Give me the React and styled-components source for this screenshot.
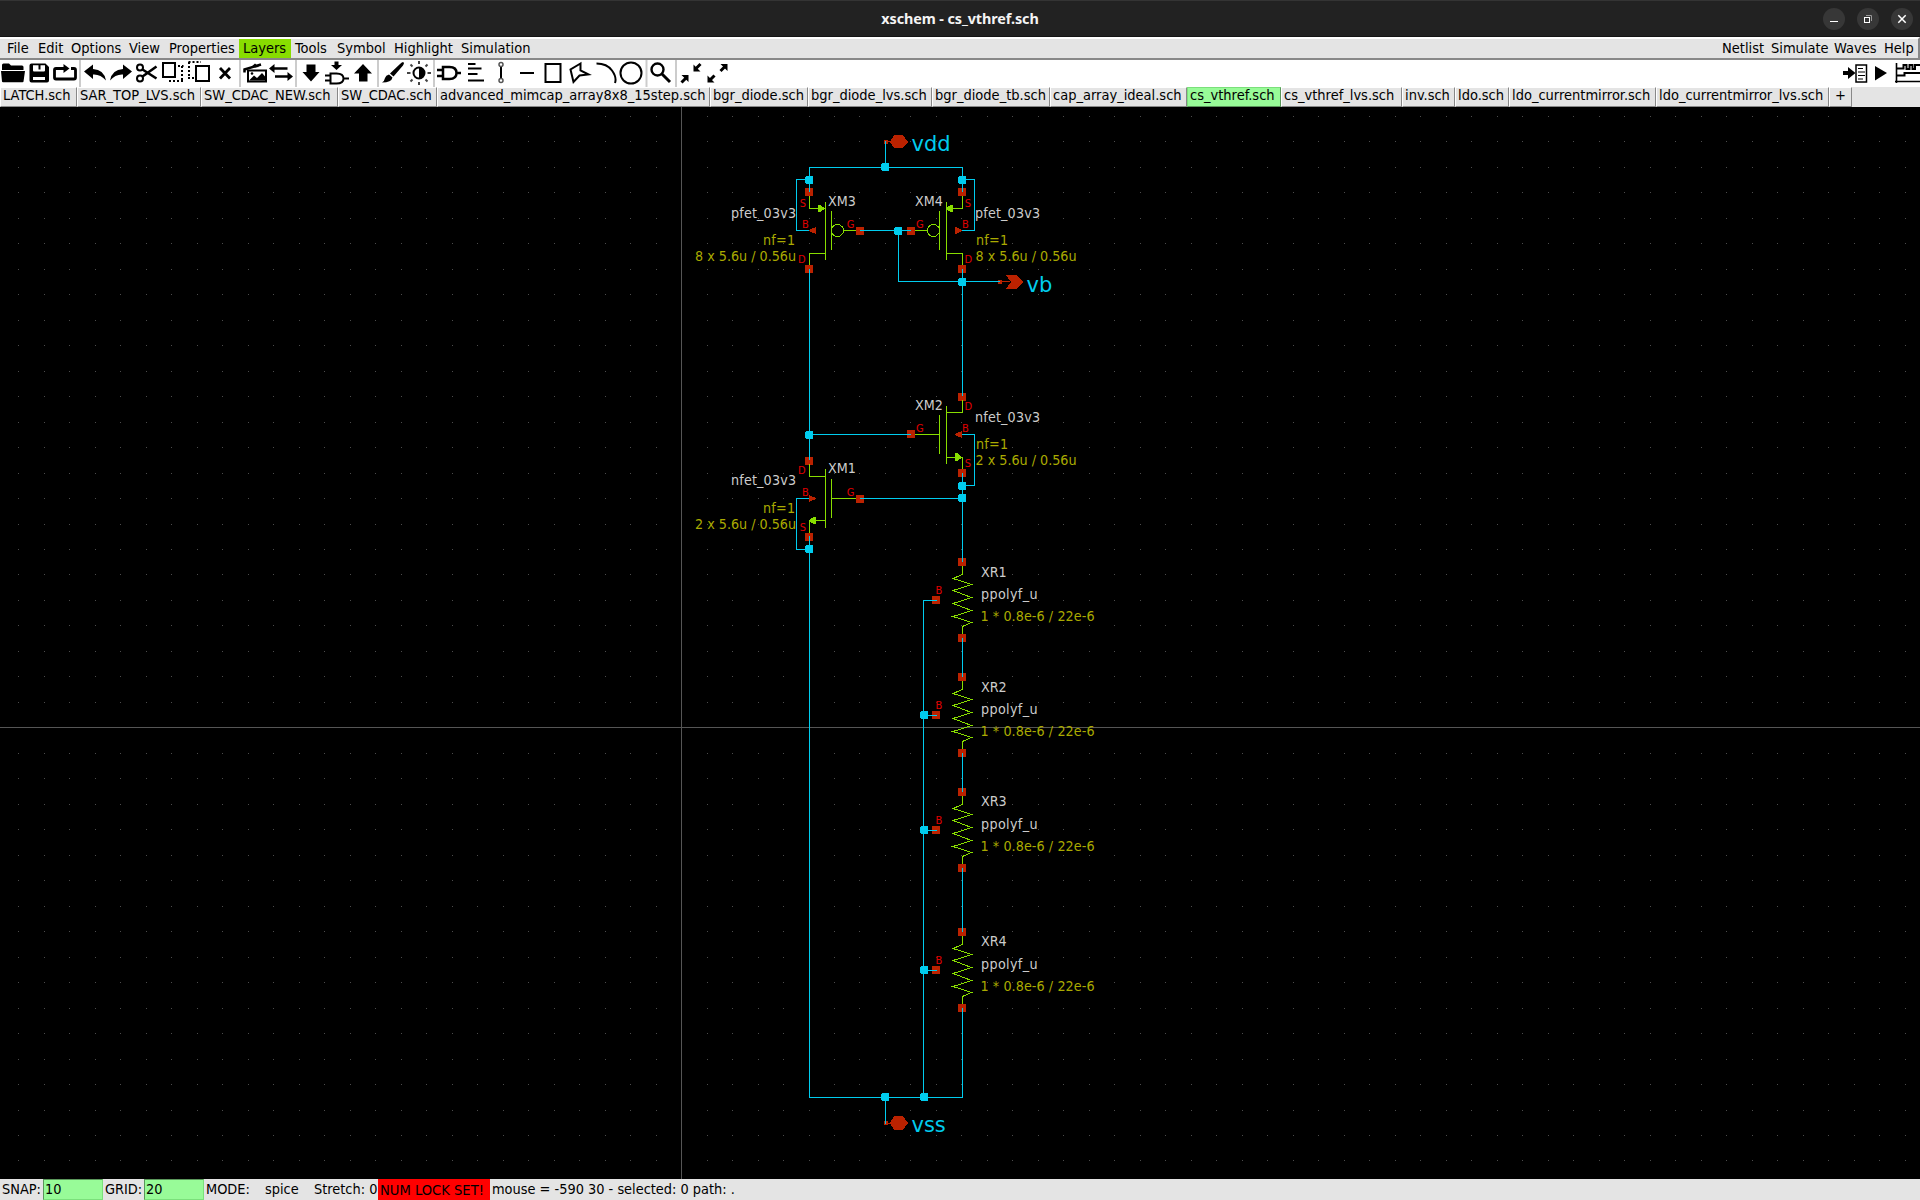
import React from "react";
import styled, { createGlobalStyle, css } from "styled-components";

const Global = createGlobalStyle`
  * { box-sizing: border-box; }
  body { margin: 0; background: #000; overflow: hidden; }
`;

const WIRE = "#00ccee";
const SYM = "#88dd00";
const PIN = "#bb2200";
const UI_FONT = '"DejaVu Sans Condensed", "DejaVu Sans", sans-serif';

const Window = styled.div`
  width: 1920px;
  height: 1200px;
  display: flex;
  flex-direction: column;
  font-family: ${UI_FONT};
  font-stretch: condensed;
  font-size: 14.5px;
  color: #000;
`;

const TitleBar = styled.header`
  height: 37px;
  flex: none;
  display: grid;
  grid-template-columns: 1fr auto 1fr;
  align-items: center;
  background: #222;
  border-top: 1px solid #343434;
  border-bottom: 1px solid #151515;
`;
const Title = styled.h1`
  margin: 0;
  grid-column: 2;
  font: 700 14.4px "Noto Sans", sans-serif;
  letter-spacing: -0.1px;
  color: #f4f4f4;
`;
const WindowButtons = styled.div`
  justify-self: end;
  display: flex;
  gap: 12px;
  padding-right: 7px;
`;
const RoundButton = styled.div`
  width: 22px;
  height: 22px;
  border-radius: 50%;
  background: #373737;
  svg { display: block; }
`;

const MenuBar = styled.nav`
  height: 23px;
  flex: none;
  display: flex;
  padding-left: 3px;
  background: #e4e4e4;
  border-top: 2px solid #fff;
  border-bottom: 2px solid #888;
  border-right: 2px solid #888;
`;
const MenuItem = styled.div`
  width: ${(p) => p.$w}px;
  padding-left: 4px;
  line-height: 19px;
  white-space: nowrap;
  background: ${(p) => (p.$on ? "#88dd00" : "transparent")};
`;
const Spacer = styled.div`
  flex: 1;
`;

const Toolbar = styled.div`
  height: 27px;
  flex: none;
  display: flex;
  background: #fff;
`;
const IconSvg = styled.svg`
  flex: none;
  display: block;
`;

const TabBar = styled.div`
  height: 20px;
  flex: none;
  display: flex;
  background: #e4e4e4;
`;
const Tab = styled.div`
  width: ${(p) => p.$w}px;
  flex: none;
  padding-left: ${(p) => p.$pad ?? 2}px;
  line-height: 15px;
  white-space: nowrap;
  background: #e4e4e4;
  border: 1px solid #888;
  border-top-color: #fff;
  border-left-color: #fff;
  ${(p) =>
    p.$on &&
    css`
      background: #98fb98;
      border-color: #7be07b #5a965a #5a965a #7be07b;
    `}
`;

const Canvas = styled.main`
  height: 1072px;
  flex: none;
  background: #000;
  svg { display: block; }
`;

const StatusBar = styled.footer`
  height: 21px;
  flex: none;
  display: flex;
  background: #e4e4e4;
  font-size: 14.4px;
  line-height: 21px;
  white-space: pre;
`;
const Field = styled.div`
  width: ${(p) => p.$w}px;
  padding-left: ${(p) => p.$pad ?? 2}px;
  flex: none;
`;
const Entry = styled(Field)`
  background: #98fb98;
  border: 1px solid #5a965a;
  border-right-color: #7be07b;
  border-bottom-color: #7be07b;
  line-height: 19px;
`;
const Alert = styled(Field)`
  background: #f00;
  font-size: 14.6px;
`;

const menus = [
  ["File", 31], ["Edit", 33], ["Options", 58], ["View", 40], ["Properties", 74],
  ["Layers", 52, true], ["Tools", 42], ["Symbol", 57], ["Highlight", 67], ["Simulation", 90],
];
const actions = [["Netlist", 49], ["Simulate", 63], ["Waves", 50], ["Help", 38]];

const tabs = [
  ["LATCH.sch", 77], ["SAR_TOP_LVS.sch", 124], ["SW_CDAC_NEW.sch", 137], ["SW_CDAC.sch", 99],
  ["advanced_mimcap_array8x8_15step.sch", 273], ["bgr_diode.sch", 98], ["bgr_diode_lvs.sch", 124],
  ["bgr_diode_tb.sch", 118], ["cap_array_ideal.sch", 137], ["cs_vthref.sch", 94],
  ["cs_vthref_lvs.sch", 121], ["inv.sch", 53], ["ldo.sch", 54], ["ldo_currentmirror.sch", 147],
  ["ldo_currentmirror_lvs.sch", 173],
];

/* Toolbar icons share one horizontal coordinate strip; each owns the slice [x, x + w]. */
const Icon = ({ x, w, children }) => (
  <IconSvg width={w} height="27" viewBox={`${x} 0 ${w} 27`} fill="none" stroke="#000" strokeWidth="2">
    {children}
  </IconSvg>
);
const Sep = ({ x, w }) => (
  <Icon x={x} w={w}>
    <path d={`M${x + w / 2} 0V27`} stroke="#ccc" />
  </Icon>
);
const S = { fill: "#000", stroke: "none" };

const ToolIcons = () => (
  <>
    <Icon x={0} w={27}>
      <path {...S} d="M2 10V5q0-1.500 1.500-1.500H9l2 2h11q1.500 0 1.500 1.500v3zM1 11H25L23.500 21.500q0 .8-1 .8H3q-.8 0-1-.8z" />
    </Icon>
    <Icon x={27} w={24}>
      <path {...S} fillRule="evenodd" d="M29.500 5.500q0-2 2-2H45.500l3.500 3.500V20.500q0 2-2 2H31.500q-2 0-2-2zM33 5.200V10.500q0 1 1 1H44q1 0 1-1V5.200h-4.500v4.300h-2V5.200zM33 17v3H45v-3z" />
    </Icon>
    <Icon x={51} w={27}>
      <path strokeWidth="2.800" d="M64 8.500H56q-1.500 0-1.500 1.500v7.500q0 1.500 1.500 1.500H74q1.500 0 1.500-1.500V10q0-1.500-1.500-1.500H71" />
      <path {...S} d="M63.500 4l6 4.500-6 4.500z" />
    </Icon>
    <Sep x={78} w={4} />
    <Icon x={82} w={26}>
      <path {...S} d="M84 11.500L93 4.500V9q11 .5 13 11.500Q100.500 14 93 14.500V19z" />
    </Icon>
    <Icon x={108} w={26}>
      <path {...S} d="M132 11.500L123 4.500V9q-11 .5-13 11.500Q115.500 14 123 14.500V19z" />
    </Icon>
    <Icon x={134} w={25}>
      <circle cx="140" cy="7.500" r="3" />
      <circle cx="140" cy="18.500" r="3" />
      <path strokeWidth="2.600" d="M142.500 9.500L156.500 18.500M142.500 16.500L156.500 6.500" />
    </Icon>
    <Icon x={159} w={26}>
      <rect x="163" y="3" width="12" height="14" />
      <path strokeDasharray="2 2" d="M178 6H183.500M182 6V22M169 21H183" />
    </Icon>
    <Icon x={185} w={28}>
      <path strokeDasharray="2 2" d="M188.500 2H201M189 2V18M188 18H194" />
      <rect x="196" y="6" width="13" height="15" />
    </Icon>
    <Icon x={213} w={25}>
      <path strokeWidth="2.800" d="M220 8L230 18.500M230 8L220 18.500" />
    </Icon>
    <Sep x={238} w={4} />
    <Icon x={242} w={26}>
      <path d="M244.500 12.500V9.500L261 4.500" strokeWidth="2.500" />
      <rect x="248" y="10.500" width="18" height="11" />
      <path {...S} d="M249.500 20l4.500-4.500 3 2.500 5-5 3.500 4v3.500h-16zM250 8l5-4.500 4 3.500z" />
      <circle {...S} cx="252" cy="13.500" r="1.300" />
    </Icon>
    <Icon x={268} w={26}>
      <path d="M272 8.500H287.500M275 16.500H290" strokeWidth="2.500" />
      <path {...S} d="M269 8.500l5.500-4.500v9zM293 16.500l-5.500-4.500v9z" />
    </Icon>
    <Sep x={294} w={4} />
    <Icon x={298} w={25}>
      <path {...S} d="M306.500 4.500h9V12h4l-8.500 9.500-8.500-9.500h4z" />
    </Icon>
    <Icon x={323} w={29}>
      <path d="M330.500 13.500h6q7 0 7 5t-7 5h-6zM325 15.500h5M325 20.500h5M344 18.500h5" />
      <path {...S} d="M334.500 1.500h4V5h3.500l-5.500 5-5.500-5h3.500z" />
    </Icon>
    <Icon x={352} w={24}>
      <path {...S} d="M359 21.500h8.500V13.500h4.500L363 4l-9 9.500h5z" />
    </Icon>
    <Sep x={376} w={4} />
    <Icon x={380} w={26}>
      <path {...S} d="M403.500 2.200q1.200 1-.5 3.300l-9.500 11-3.500-3L400 4q2.500-2.300 3.500-1.800zM389 14.500l3.500 3q-1 5-10.500 5 2.500-1.500 3-4.500.8-3 4-3.500z" />
    </Icon>
    <Icon x={406} w={26}>
      <circle cx="419" cy="13" r="5.500" />
      <path {...S} d="M419 7.500a5.500 5.500 0 0 1 0 11z" />
      <path stroke="#444" d="M419 1v3M419 22v3M407 13h3.500M427.500 13h3.500M410.500 4.500l2 2M425.500 19.500l2 2M410.500 21.500l2-2M425.500 6.500l2-2" />
    </Icon>
    <Sep x={432} w={4} />
    <Icon x={436} w={27}>
      <path strokeWidth="2.500" d="M443 7h6.500q7 0 7 6t-7 6H443zM437 10h6M437 16h6M456.500 13h4.500" />
    </Icon>
    <Icon x={463} w={26}>
      <path d="M468 4h7.500M468 8.500h13.500M468 14h9.500M468 20.500h16" />
    </Icon>
    <Icon x={489} w={24}>
      <path d="M501 6v15" />
      <circle cx="501" cy="4.500" r="2" stroke="#555" fill="#fff" strokeWidth="1.500" />
      <circle cx="501" cy="20.500" r="2" stroke="#555" fill="#fff" strokeWidth="1.500" />
    </Icon>
    <Icon x={513} w={26}>
      <path d="M520 13h14" />
    </Icon>
    <Icon x={539} w={26}>
      <rect x="545.500" y="4" width="15" height="18" />
    </Icon>
    <Icon x={565} w={28}>
      <path d="M580.500 3.500L570.500 9.500 573.500 22 579.500 15.500 588.500 14.500 580.500 10.500z" />
    </Icon>
    <Icon x={593} w={25}>
      <path d="M596.500 3.500Q607 3.500 612 10.500T615 23" />
    </Icon>
    <Icon x={618} w={27}>
      <circle cx="631" cy="13" r="10.500" />
    </Icon>
    <Sep x={645} w={3} />
    <Icon x={648} w={26}>
      <circle cx="657.500" cy="9.500" r="6" strokeWidth="2.400" />
      <path strokeWidth="3" d="M662 14l8 8" />
    </Icon>
    <Sep x={674} w={4} />
    <Icon x={678} w={26}>
      <path {...S} d="M693.500 4.500V11.500H700.500zM688.500 22V15H681.500z" />
      <path strokeWidth="3" d="M696 8.500l4.500-4.500M686 18l-4.500 4.500" />
    </Icon>
    <Icon x={704} w={26}>
      <path {...S} d="M727.500 11V4H720.500zM707.500 15.500V22.500H714.500z" />
      <path strokeWidth="3" d="M725 6.500l-4.500 4.500M710 20l4.500-4.500" />
    </Icon>
  </>
);

const RunIcons = () => (
  <>
    <Icon x={1840} w={30}>
      <path {...S} d="M1843 11h5V7l7.500 6-7.500 6v-4h-5z" />
      <rect x="1856" y="5" width="10.500" height="17" strokeWidth="1.500" />
      <path strokeWidth="1.200" d="M1858 8.500h5M1858 12h7M1858 15.500h7M1858 19h5" />
    </Icon>
    <Icon x={1870} w={22}>
      <path {...S} d="M1875 6l12 7-12 7.500z" />
    </Icon>
    <Icon x={1892} w={28}>
      <path strokeWidth="1.600" d="M1896.500 3v20M1895 21.500h25" />
      <path strokeWidth="2" d="M1897 8.500h6.500V5h3v4h3V5h3v4h2.500V5h5M1897 15.500h7.500v-2.500H1920" />
    </Icon>
  </>
);

/* ---------- schematic ---------- */

const Diagram = styled.svg`
  font-family: ${UI_FONT};
  font-stretch: condensed;
  shape-rendering: crispEdges;
`;
const Wire = styled.path`
  fill: none;
  stroke: ${WIRE};
`;
const Sym = styled.path`
  fill: none;
  stroke: ${SYM};
`;
const SymFill = styled.path`
  fill: ${SYM};
`;
const PinFill = styled.path`
  fill: ${PIN};
`;
const Label = styled.text`
  fill: ${(p) => p.$c || "#ccc"};
  font-size: 14.2px;
`;
const PinName = styled.text`
  fill: #e00000;
  font-size: 11px;
`;
const NetName = styled.text`
  fill: ${WIRE};
  font-family: "DejaVu Sans", sans-serif;
  font-stretch: normal;
  font-size: 21px;
`;
const YELLOW = "#aaaa00";

const gridDots = (() => {
  let d = "";
  for (let i = 0; i < 75; i++)
    for (let j = 0; j < 42; j++)
      d += `M${Math.round(18.32 + 25.49 * i)} ${Math.floor(116.34 + 25.479 * j)}h1v1h-1z`;
  return d;
})();

const Pin = ({ x, y }) => <PinFill d={`M${x - 4} ${y - 4}h8v8h-8z`} />;
const Node = ({ x, y }) => (
  <path fill={WIRE} d={`M${x - 3} ${y - 4}h6l1 1v6l-1 1h-6l-1 -1v-6z`} />
);

const Labels = ({ name, model, size, right, dy }) =>
  right ? (
    <>
      <Label x="915" y={206 + dy}>{name}</Label>
      <Label x="975" y={217.500 + dy} textLength="65">{model}</Label>
      <Label x="976" y={245 + dy} $c={YELLOW} textLength="32">nf=1</Label>
      <Label x="975.500" y={261 + dy} $c={YELLOW} textLength="101">{size}</Label>
    </>
  ) : (
    <>
      <Label x="828" y={Math.floor(206 + dy - (dy ? 0.5 : 0))}>{name}</Label>
      <Label x="731" y={217.500 + dy} textLength="65">{model}</Label>
      <Label x="763" y={245 + dy} $c={YELLOW} textLength="32">nf=1</Label>
      <Label x="695" y={261 + dy} $c={YELLOW} textLength="101">{size}</Label>
    </>
  );

const PinNames = ({ right, sy, by, dy }) => (
  <g>
    <PinName x={right ? 964.8 : 799.8} y={sy}>S</PinName>
    <PinName x={right ? 962 : 802} y={by}>B</PinName>
    <PinName x={right ? 916 : 846.8} y={by}>G</PinName>
    <PinName x={right ? 964.5 : 798} y={dy}>D</PinName>
  </g>
);

const resistors = [["XR1", 0, 577], ["XR2", 115, 577], ["XR3", 230, 576], ["XR4", 370, 576]];

const Resistor = ({ name, dy, nameY }) => (
  <g transform={`translate(0 ${dy})`}>
    <Pin x={962} y={562} />
    <Pin x={962} y={638} />
    <Pin x={936} y={600} />
    <Sym d="M962.500 566V574.500L953 578.500 971.500 584.500 953 590.500 971.500 597.500 953 603.500 971.500 610.500 953 616.500 971.500 622.500 962.500 626.500V634" />
    <Wire d="M923.500 600.500H937" />
    <PinName x="935.500" y="594">B</PinName>
    <Label x="981" y={nameY}>{name}</Label>
    <Label x="981" y="599" textLength="56.500">ppolyf_u</Label>
    <Label x="980.500" y="621" $c={YELLOW} textLength="114">1 * 0.8e-6 / 22e-6</Label>
  </g>
);

const Schematic = () => (
  <Diagram width="1920" height="1072" viewBox="0 107 1920 1072">
    <path d={gridDots} fill="#4c4c4c" />
    <path d="M681.500 107V1179M0 727.500H1920" stroke="#555" fill="none" />

    {/* M3 / M4 */}
    <Pin x={809} y={192} /><Pin x={809} y={269} /><Pin x={860} y={231} />
    <Pin x={962} y={192} /><Pin x={962} y={269} /><Pin x={911} y={231} />
    <Sym d="M809.500 196V208.500H825M825.500 202V260M831.500 211V250M844 230.500H856M825 253.500H809.500V265" />
    <circle cx="837.500" cy="230.500" r="6" fill="none" stroke={SYM} />
    <SymFill d="M818 205h2l5 3v1l-5 3h-2z" />
    <PinFill d="M809 230l4-2 3-1v7l-3-1-4-2z" />
    <Sym d="M962.500 196V208.500H946M946.500 202V260M939.500 211V250M915 230.500H927M946 253.500H962.500V265" />
    <circle cx="933.500" cy="230.500" r="6" fill="none" stroke={SYM} />
    <SymFill d="M953 205h-2l-5 3v1l5 3h2z" />
    <PinFill d="M962 230l-4-2-3-1v7l3-1 4-2z" />

    {/* M2 */}
    <Pin x={962} y={397} /><Pin x={962} y={473} /><Pin x={911} y={434} />
    <Sym d="M962.500 400V412.500H946M946.500 406V464M939.500 415V454M915 434.500H939M946 457.500H962.500V469" />
    <SymFill d="M955 453h2l5 4v1l-5 3h-2z" />
    <PinFill d="M955 434l7-3v7l-7-3z" />

    {/* M1 */}
    <Pin x={809} y={461} /><Pin x={809} y={537} /><Pin x={860} y={499} />
    <Sym d="M809.500 464V476.500H825M825.500 469V528M831.500 479V518M831 498.500H856M825 520.500H809.500V533" />
    <SymFill d="M816 517h-2l-5 3v1l5 3h2z" />
    <PinFill d="M816 498l-7-3v7l7-3z" />

    {resistors.map(([n, dy, nameY]) => (
      <Resistor key={n} name={n} dy={dy} nameY={nameY} />
    ))}

    {/* port symbols */}
    <PinFill d="M884 140h4v4h-4zM888 141h3v1h-3zM894 135h9l5 7-5 6h-9l-4-6z" />
    <PinFill d="M884 1121h4v4h-4zM888 1123h3v1h-3zM894 1116h9l5 7-5 7h-9l-4-7z" />
    <PinFill d="M998 280h4v4h-4zM1002 281h8v1h-8zM1006 275h11l6 7-6 7h-11l5-7z" />

    {/* nets */}
    <Wire d="M885.500 141V167M809.500 192V167.500H962.500V192M809 179.500H796.500V230.500H809M962 179.500H974.500V230.500H962" />
    <Wire d="M860 230.500H911M898.500 231V281.500H1000M962.500 269V396M809.500 269V460M809 434.500H911" />
    <Wire d="M962 434.500H974.500V485.500H962M962.500 473V562M860 498.500H962M809 498.500H796.500V549.500H809" />
    <Wire d="M962.500 638V677M962.500 753V792M962.500 868V932M962.500 1008V1097.500H809.500V536" />
    <Wire d="M923.500 600V1097M885.500 1097V1124" />
    <Node x={885} y={167} /><Node x={809} y={180} /><Node x={962} y={180} />
    <Node x={898} y={231} /><Node x={962} y={282} /><Node x={809} y={435} />
    <Node x={962} y={486} /><Node x={962} y={498} /><Node x={809} y={549} />
    <Node x={924} y={715} /><Node x={924} y={830} /><Node x={924} y={970} />
    <Node x={885} y={1097} /><Node x={924} y={1097} />

    <Labels name="XM3" model="pfet_03v3" size="8 x 5.6u / 0.56u" dy={0} />
    <Labels name="XM4" model="pfet_03v3" size="8 x 5.6u / 0.56u" dy={0} right />
    <Labels name="XM2" model="nfet_03v3" size="2 x 5.6u / 0.56u" dy={204} right />
    <Labels name="XM1" model="nfet_03v3" size="2 x 5.6u / 0.56u" dy={267.5} />
    <PinNames sy={207} by={228} dy={263} />
    <PinNames sy={207} by={228} dy={263} right />
    <PinNames sy={467} by={432} dy={410} right />
    <PinNames sy={531} by={496} dy={474} />
    <NetName x="911.500" y="151">vdd</NetName>
    <NetName x="1026.500" y="291.500">vb</NetName>
    <NetName x="911.500" y="1131.500">vss</NetName>
  </Diagram>
);

export default function App() {
  return (
    <Window>
      <Global />
      <TitleBar>
        <Title>xschem - cs_vthref.sch</Title>
        <WindowButtons>
          <RoundButton>
            <svg width="22" height="22" stroke="#fff" fill="none"><path d="M7 13.500h8" /></svg>
          </RoundButton>
          <RoundButton>
            <svg width="22" height="22" stroke="#fff" fill="none">
              <rect x="7.500" y="9.500" width="5" height="5" />
              <path d="M9 7.500h5.500V13" stroke="#999" />
            </svg>
          </RoundButton>
          <RoundButton>
            <svg width="22" height="22" stroke="#fff" strokeWidth="1.500" fill="none">
              <path d="M7.300 7.300l7.400 7.400M14.700 7.300l-7.400 7.400" />
            </svg>
          </RoundButton>
        </WindowButtons>
      </TitleBar>
      <MenuBar>
        {menus.map(([t, w, on]) => (
          <MenuItem key={t} $w={w} $on={on}>{t}</MenuItem>
        ))}
        <Spacer />
        {actions.map(([t, w]) => (
          <MenuItem key={t} $w={w}>{t}</MenuItem>
        ))}
      </MenuBar>
      <Toolbar>
        <ToolIcons />
        <Spacer />
        <RunIcons />
      </Toolbar>
      <TabBar>
        {tabs.map(([t, w]) => (
          <Tab key={t} $w={w} $on={t === "cs_vthref.sch"}>{t}</Tab>
        ))}
        <Tab $w={23} $pad={5}>+</Tab>
      </TabBar>
      <Canvas>
        <Schematic />
      </Canvas>
      <StatusBar>
        <Field $w={43}>SNAP:</Field>
        <Entry $w={60} $pad={1}>10</Entry>
        <Field $w={41}>GRID:</Field>
        <Entry $w={60} $pad={1}>20</Entry>
        <Field $w={61}>MODE:</Field>
        <Field $w={49} $pad={0}>spice</Field>
        <Field $w={64} $pad={0}>Stretch: 0</Field>
        <Alert $w={112}>NUM LOCK SET!</Alert>
        <Field $w={300} $pad={2}>mouse = -590 30 - selected: 0 path: .</Field>
      </StatusBar>
    </Window>
  );
}
